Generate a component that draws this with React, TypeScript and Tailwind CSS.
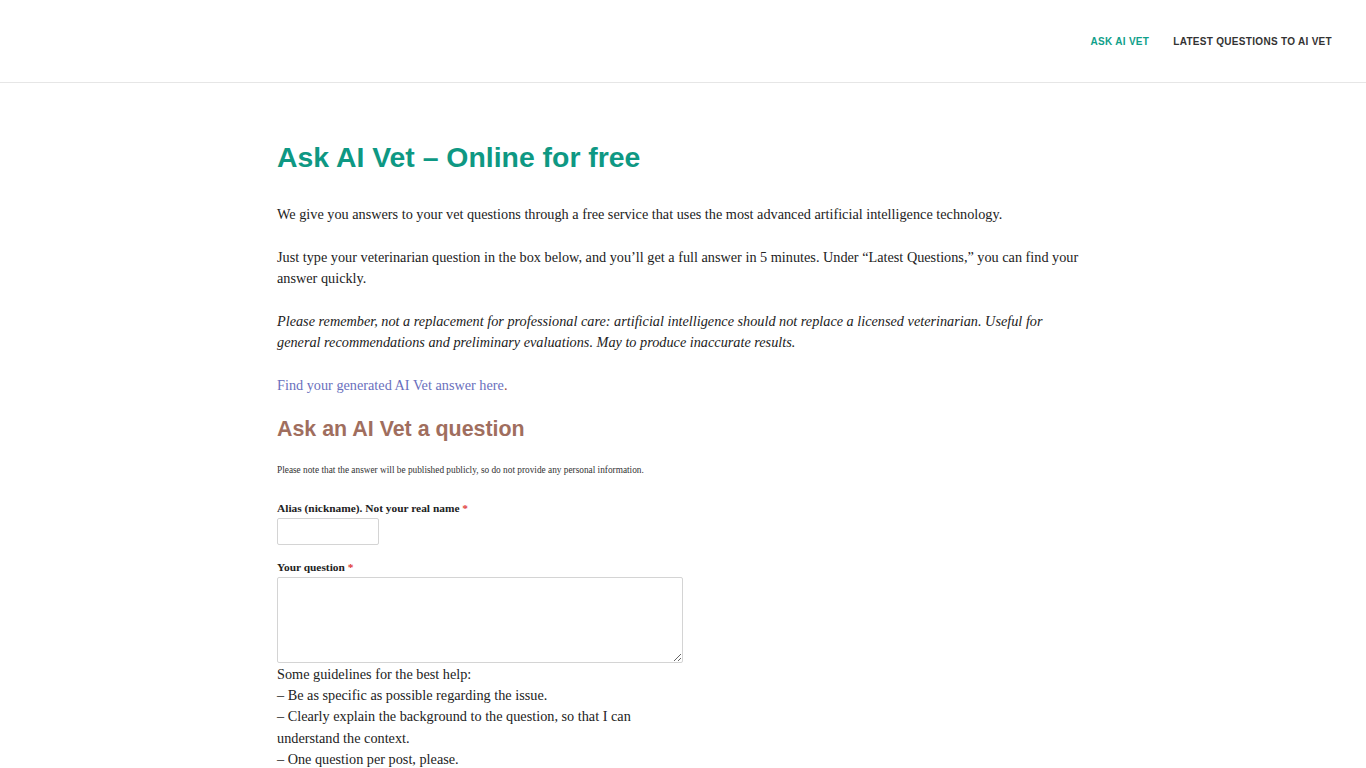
import React, { useState } from 'react';

const serif = { fontFamily: '"Liberation Serif", "Times New Roman", serif' };

const App: React.FC = () => {
  const [alias, setAlias] = useState('');
  const [question, setQuestion] = useState('');

  return (
    <div className="min-h-screen bg-white text-[#222]" style={serif}>
      <header className="h-[83px] border-b border-[#e6e6e6] flex items-center justify-end pr-[34px] font-['Liberation_Sans',Arial,sans-serif]">
        <nav className="flex gap-[24px] text-[10px] font-bold uppercase tracking-[0.03em] pt-[1px]">
          <a href="#" className="text-[#10a08a]">Ask AI Vet</a>
          <a href="#" className="text-[#333]">Latest Questions to AI Vet</a>
        </nav>
      </header>

      <main className="w-[812px] mx-auto pt-[56px]">
        <h1 className="font-['Liberation_Sans',Arial,sans-serif] font-bold text-[28.4px] leading-[36px] text-[#0e9883]">
          Ask AI Vet – Online for free
        </h1>

        <div className="mt-[29px] text-[14.25px] leading-[21.4px] space-y-[21.4px]">
          <p>We give you answers to your vet questions through a free service that uses the most advanced artificial intelligence technology.</p>
          <p>Just type your veterinarian question in the box below, and you’ll get a full answer in 5 minutes. Under “Latest Questions,” you can find your answer quickly.</p>
          <p className="italic">Please remember, not a replacement for professional care: artificial intelligence should not replace a licensed veterinarian. Useful for general recommendations and preliminary evaluations. May to produce inaccurate results.</p>
          <p>
            <a href="#" className="text-[#6a6fbd]">Find your generated AI Vet answer here</a>
            <span className="text-[#a04a3a]">.</span>
          </p>
        </div>

        <h2 className="mt-[17px] font-['Liberation_Sans',Arial,sans-serif] font-bold text-[21.4px] leading-[30px] text-[#a06e5e]">
          Ask an AI Vet a question
        </h2>

        <p className="mt-[20px] text-[9.3px] leading-[12px] text-[#333]">
          Please note that the answer will be published publicly, so do not provide any personal information.
        </p>

        <form className="mt-[24px] w-[406px]" onSubmit={(e) => e.preventDefault()}>
          <label className="block text-[11.4px] font-bold leading-[16px]">
            Alias (nickname). Not your real name <span className="text-[#e03b3b]">*</span>
          </label>
          <input
            type="text"
            value={alias}
            onChange={(e) => setAlias(e.target.value)}
            className="mt-[2px] block w-[102px] h-[27px] border border-[#d4d4d4] rounded-[2px] px-2 text-[14px] outline-none"
          />

          <label className="block mt-[14px] text-[11.4px] font-bold leading-[16px]">
            Your question <span className="text-[#e03b3b]">*</span>
          </label>
          <textarea
            value={question}
            onChange={(e) => setQuestion(e.target.value)}
            className="mt-[2px] block w-[406px] h-[86px] border border-[#d4d4d4] rounded-[2px] p-2 text-[14px] outline-none"
          />

          <div className="text-[14.25px] leading-[21.4px] pt-[1px]">
            <p>Some guidelines for the best help:</p>
            <p>– Be as specific as possible regarding the issue.</p>
            <p>– Clearly explain the background to the question, so that I can understand the context.</p>
            <p>– One question per post, please.</p>
          </div>
        </form>
      </main>
    </div>
  );
};

export default App;
